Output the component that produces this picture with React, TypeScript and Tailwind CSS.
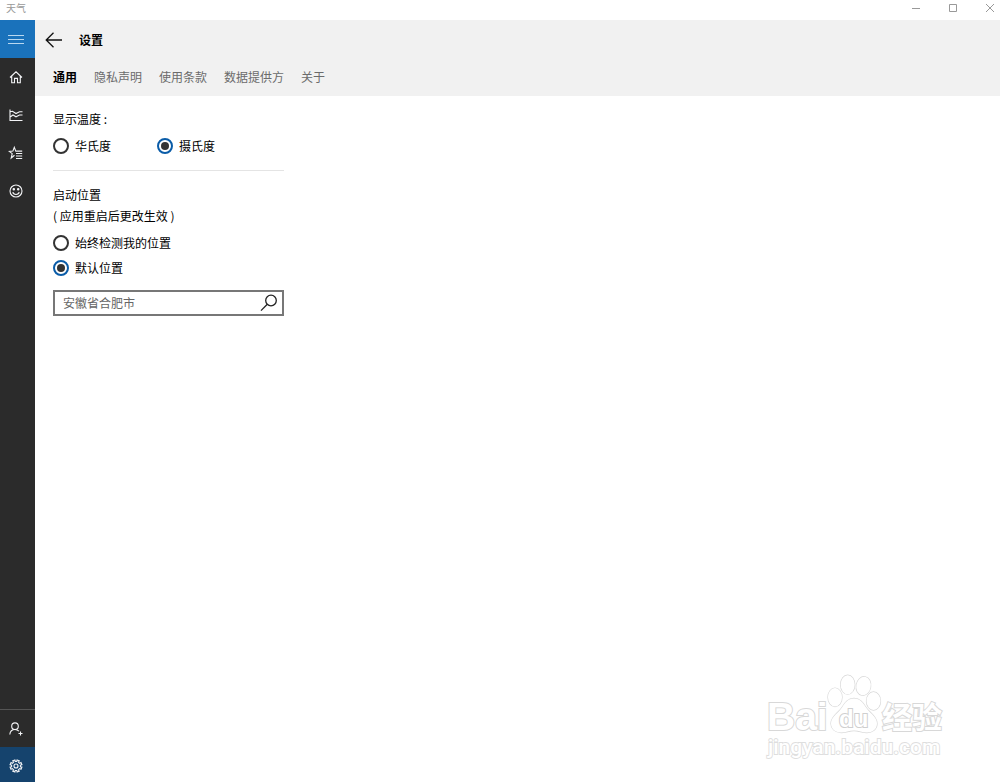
import React, { useState } from 'react';

// Tabs shown under the page title
const TABS = ['通用', '隐私声明', '使用条款', '数据提供方', '关于'];

interface IconProps {
  children: React.ReactNode;
}

const Icon: React.FC<IconProps> = ({ children }) => (
  <svg
    viewBox="0 0 16 16"
    className="size-4 shrink-0"
    fill="none"
    stroke="currentColor"
    strokeWidth="1.1"
    aria-hidden="true"
  >
    {children}
  </svg>
);

interface NavButtonProps {
  label: string;
  className?: string;
  children: React.ReactNode;
}

const NavButton: React.FC<NavButtonProps> = ({ label, className = 'h-[38px]', children }) => (
  <button
    type="button"
    aria-label={label}
    className={`flex w-full items-center justify-center pr-1 text-gray-100 ${className}`}
  >
    <Icon>{children}</Icon>
  </button>
);

interface RadioProps {
  name: string;
  label: string;
  checked: boolean;
  onChange: () => void;
}

const Radio: React.FC<RadioProps> = ({ name, label, checked, onChange }) => (
  <label className="flex h-[25px] items-center gap-1.5">
    <input
      type="radio"
      name={name}
      checked={checked}
      onChange={onChange}
      className="grid size-4 shrink-0 appearance-none place-content-center rounded-full border-2 border-[#333] bg-white before:size-2 before:rounded-full checked:border-[#0a5ca8] checked:before:bg-[#333]"
    />
    {label}
  </label>
);

const Sidebar: React.FC = () => (
  <nav className="flex w-[35px] shrink-0 flex-col bg-[#2b2b2b]">
    <NavButton label="菜单" className="h-[38px] bg-[#1a72bb]">
      <path d="M0 4.5h16M0 8.5h16M0 12.5h16" strokeWidth="1" stroke="#b9d8f0" />
    </NavButton>
    <NavButton label="主页">
      <path d="M2 8.5 8 2.8l6 5.7M3.7 7v6.7h2.8V9.4h3v4.3h2.8V7" />
    </NavButton>
    <NavButton label="历史天气">
      <path d="M2 2.5v11h12.5M2 4.7l2.5-.4 3.5 2.2 3.5-1.8h3M2.5 9.8 5 8l3 1.8 3.5-1.8h3" />
    </NavButton>
    <NavButton label="收藏夹">
      <path d="M6.5 10.3 3.2 13l1-4.4L1.3 6.4l3.6-.3L6.3 2.3l1.5 3.8h6.4M8 8.5h6.2M8 11h6.2M8 13.5h6.2" />
    </NavButton>
    <NavButton label="发送反馈">
      <circle cx="8" cy="8" r="6" />
      <path d="M4.8 9.2c.6 3 5.8 3 6.4 0" />
      <circle cx="5.8" cy="6.3" r=".7" fill="currentColor" />
      <circle cx="10.2" cy="6.3" r=".7" fill="currentColor" />
    </NavButton>

    <div className="mt-auto border-t border-[#555]">
      <NavButton label="登录" className="h-[37px]">
        <circle cx="7" cy="5.2" r="3.3" />
        <path d="M1.8 13.5c.3-3 2.3-5 5.2-5 1.6 0 2.9.6 3.9 1.7M12.5 10.5v4M10.5 12.5h4" />
      </NavButton>
      <NavButton label="设置" className="h-[35px] bg-[#15436d] pt-0.5">
        <path d="m6.9 2 .3 1.4h1.6L9.1 2l2.1.8-.8 1.3 1.2 1.2 1.4-.7.9 2.1-1.5.4v1.7l1.5.4-.9 2.1-1.4-.7-1.2 1.2.8 1.4-2.1.8-.3-1.5H7.2L6.9 14l-2.1-.8.8-1.4-1.2-1.2-1.4.7-.9-2.1 1.5-.4V7.1l-1.5-.4L3 4.6l1.4.7 1.2-1.2-.8-1.3z" />
        <circle cx="8" cy="8" r="2" />
      </NavButton>
    </div>
  </nav>
);

const Watermark: React.FC = () => (
  <svg
    viewBox="0 0 184 92"
    className="pointer-events-none absolute right-[52px] bottom-4 h-[92px] w-[184px]"
    fill="#fff"
    stroke="#d8d8d8"
    strokeWidth="1.3"
    aria-label="Baidu 经验"
  >
    <g fontFamily="'Liberation Sans', sans-serif" fontWeight="700" style={{ paintOrder: 'stroke' }}>
      <text x="3" y="56" fontSize="39" strokeWidth="2">Bai</text>
      <ellipse cx="71" cy="23.3" rx="7" ry="9.2" />
      <ellipse cx="83.7" cy="10.7" rx="7" ry="9.5" />
      <ellipse cx="99.5" cy="12" rx="7.2" ry="9.3" transform="rotate(10 99.5 12)" />
      <ellipse cx="109.500" cy="27" rx="7" ry="9" />
      <path d="M90 24.500c6 0 9 4 12 9 3 5 11 9 11 16 0 6-5 9-10 9-5 0-8-2-13-2s-8 2-13 2c-6 0-10-4-10-9 0-7 8-11 11-16 3-5 6-9 12-9z" />
      <text x="75" y="53" fontSize="24" strokeWidth="2" stroke="#cfcfcf">du</text>
      <text x="118" y="54" fontSize="30" strokeWidth="2" fontFamily="'Noto Sans CJK SC', sans-serif">经验</text>
    </g>
    <text
      x="4"
      y="80"
      fontSize="21"
      strokeWidth="1.8"
      stroke="#dedede"
      fontFamily="Roboto, sans-serif"
      fontWeight="500"
      style={{ paintOrder: 'stroke' }}
    >
      jingyan.baidu.com
    </text>
  </svg>
);

const App: React.FC = () => {
  const [tab, setTab] = useState('通用');
  const [unit, setUnit] = useState('celsius');
  const [launch, setLaunch] = useState('default');
  const [place, setPlace] = useState('安徽省合肥市');

  return (
    <div className="relative flex min-h-screen flex-col bg-white font-['Noto_Sans_CJK_SC',sans-serif] text-xs text-black">
      {/* Title bar */}
      <div className="flex h-5 shrink-0 items-center justify-between pr-[5px] pb-1 pl-1.5 text-[#999]">
        <span className="text-[10px]">天气</span>
        <div className="flex gap-[27px]">
          <button type="button" aria-label="最小化">
            <svg viewBox="0 0 10 10" className="size-2.5" stroke="currentColor"><path d="M1 5.5h8" /></svg>
          </button>
          <button type="button" aria-label="最大化">
            <svg viewBox="0 0 10 10" className="size-2.5" fill="none" stroke="currentColor"><path d="M1.5 1.5h7v7h-7z" /></svg>
          </button>
          <button type="button" aria-label="关闭">
            <svg viewBox="0 0 10 10" className="size-2.5" stroke="currentColor"><path d="m1 1 8 8M9 1 1 9" /></svg>
          </button>
        </div>
      </div>

      <div className="flex grow">
        <Sidebar />

        <div className="grow">
          <header className="bg-[#f1f1f1]">
            <div className="flex h-[38px] items-center gap-4 pt-0.5 pl-2.5">
              <button type="button" aria-label="返回">
                <svg viewBox="0 0 18 16" className="h-4 w-[18px]" fill="none" stroke="#111" strokeWidth="1.3">
                  <path d="M17 8H1M8.500 .8 1.200 8l7.300 7.200" />
                </svg>
              </button>
              <h1 className="font-bold">设置</h1>
            </div>
            <div className="flex h-[38px] items-center gap-[17px] pl-[18px]">
              {TABS.map((name) => (
                <button
                  key={name}
                  type="button"
                  onClick={() => setTab(name)}
                  className={name === tab ? 'font-bold' : 'text-[#6b6b6b]'}
                >
                  {name}
                </button>
              ))}
            </div>
          </header>

          <main className="max-w-[249px] pt-[15px] pl-[18px]">
            {/* Temperature unit */}
            <fieldset className="border-b border-[#e4e4e4] pb-3">
              <legend className="mb-1.5">显示温度 :</legend>
              <div className="grid grid-cols-[104px_1fr]">
                <Radio name="unit" label="华氏度" checked={unit === 'fahrenheit'} onChange={() => setUnit('fahrenheit')} />
                <Radio name="unit" label="摄氏度" checked={unit === 'celsius'} onChange={() => setUnit('celsius')} />
              </div>
            </fieldset>

            {/* Launch location */}
            <fieldset className="mt-4">
              <legend className="mb-[5px]">启动位置</legend>
              <p className="mb-1.5">( 应用重启后更改生效 )</p>
              <Radio name="launch" label="始终检测我的位置" checked={launch === 'detect'} onChange={() => setLaunch('detect')} />
              <Radio name="launch" label="默认位置" checked={launch === 'default'} onChange={() => setLaunch('default')} />
            </fieldset>

            <div className="mt-2.5 flex h-[26px] items-center border-2 border-[#777] pr-1 pl-2">
              <input
                type="text"
                aria-label="默认位置"
                value={place}
                onChange={(e) => setPlace(e.target.value)}
                className="min-w-0 grow text-[#666] outline-none"
              />
              <button type="button" aria-label="搜索">
                <svg viewBox="0 0 18 18" className="size-[18px]" fill="none" stroke="#222" strokeWidth="1.3">
                  <circle cx="11" cy="6.5" r="5.3" />
                  <path d="M7.3 10.3 1 16.6" />
                </svg>
              </button>
            </div>
          </main>
        </div>
      </div>

      <Watermark />
    </div>
  );
};

export default App;
